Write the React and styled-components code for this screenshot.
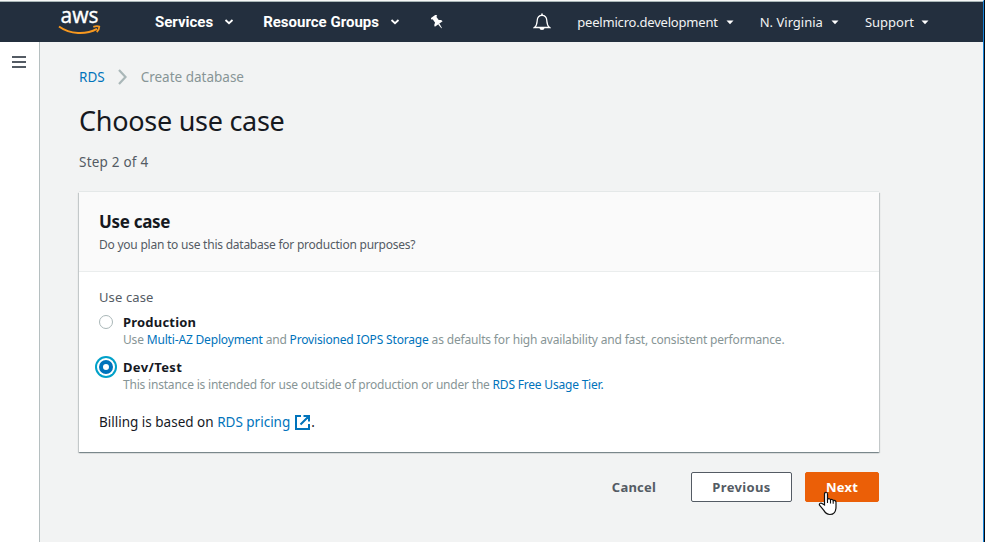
import React from "react";
import styled, { createGlobalStyle } from "styled-components";

const Global = createGlobalStyle`
  * { box-sizing: border-box; }
  body { margin: 0; overflow: hidden; font-family: "Noto Sans", sans-serif; }
`;
const Window = styled.div`
  width: 985px; height: 542px; display: flex; flex-direction: column;
  background: #f2f3f3; border-right: 1px solid #050a12;
`;
const Frame = styled.div`
  flex: 1; display: flex; flex-direction: column; min-height: 0;
  border-top: 1px solid #f7f8f8; border-right: 1px solid #1883d7;
`;
const Nav = styled.nav`
  height: 41px; flex: none; display: flex; align-items: center;
  background: #232f3e; border-top: 1px solid #aab7b8; color: #fff;
`;
const Logo = styled.svg`margin-left: 57px; flex: none; overflow: visible;`;
const MainMenu = styled.div`display: flex; align-items: center; margin-left: 53px;`;
const MainItem = styled.span`
  display: flex; align-items: center; gap: 11px; margin-right: ${(p) => p.$gap}px;
  font: 700 15px/20px Roboto, sans-serif;
`;
const AccountMenu = styled.div`display: flex; align-items: center; margin-left: auto; margin-right: 54px;`;
const AccountItem = styled.span`
  display: flex; align-items: center; gap: ${(p) => p.$inner || 8}px; margin-left: ${(p) => p.$gap}px;
  font-size: 13px; line-height: 20px; color: #f2f3f3; letter-spacing: ${(p) => p.$track || 0}px;
`;
const Body = styled.div`flex: 1; display: flex; min-height: 0;`;
const Rail = styled.aside`
  display: flex; align-items: flex-start;
  width: 40px; flex: none; background: #fff; border-right: 1px solid #b5bfc0;
  padding: 14px 0 0 12px;
`;
const Content = styled.main`width: 839px; padding: 25px 0 0 39px; color: #16191f;`;
const Crumbs = styled.div`
  display: flex; align-items: center; height: 20px; font-size: 13.5px; color: #879596;
`;
const Link = styled.a`color: #0073bb;`;
const Chevron = styled.svg`margin: 0 14px 0 13px;`;
const Title = styled.h1`
  margin: 16px 0 0; font-weight: 400; font-size: 27px; line-height: 36px; letter-spacing: -0.28px;
`;
const Step = styled.div`
  margin-top: 13px; font-size: 13.5px; line-height: 20px; color: #545b64; letter-spacing: 0.22px;
`;
const Card = styled.section`
  margin-top: 20px; width: 800px; height: 260px; background: #fff;
  box-shadow: 0 1px 1px 0 rgba(0,28,36,.3), 1px 1px 1px 0 rgba(0,28,36,.15), -1px 1px 1px 0 rgba(0,28,36,.15), 0 -1px 0 #e4e8e8;
`;
const CardHeader = styled.header`
  height: 80px; padding: 19px 20px 0; background: #fafafa; border-bottom: 1px solid #eaeded;
`;
const CardTitle = styled.h2`
  margin: 0; font-weight: 700; font-size: 17px; line-height: 22px; letter-spacing: -0.3px;
`;
const CardHint = styled.div`
  margin-top: 2px; font-size: 12px; line-height: 20px; color: #545b64; letter-spacing: -0.235px;
`;
const CardBody = styled.div`padding: 15px 20px 0;`;
const FieldLabel = styled.div`
  font-size: 13px; line-height: 20px; color: #545b64; margin-bottom: 5px; letter-spacing: 0.12px;
`;
const Option = styled.div`display: flex; gap: 10px; height: 45px;`;
const Radio = styled.span`
  width: 14px; height: 14px; margin-top: 3px; flex: none; border-radius: 50%; background: #fff;
  border: ${(p) => (p.$checked ? "4px solid #0073bb" : "1px solid #aab7b8")};
  box-shadow: ${(p) => (p.$checked ? "0 0 0 2px #fff, 0 0 0 4px #00a1c9" : "none")};
`;
const OptionName = styled.div`
  font-weight: 700; font-size: 13px; line-height: 20px; letter-spacing: ${(p) => p.$track || 0}px;
`;
const OptionHint = styled.div`
  font-size: 12px; line-height: 16px; color: #879596; white-space: nowrap;
  letter-spacing: ${(p) => p.$track || 0}px;
`;
const Billing = styled.div`
  display: flex; align-items: center; margin-top: 10px; font-size: 13.5px; line-height: 20px;
  white-space: pre;
`;
const External = styled.svg`margin: 0 1px 0 5px;`;
const Actions = styled.div`
  display: flex; justify-content: flex-end; margin-top: 20px; width: 800px; gap: 13px;
`;
const Button = styled.button`
  position: relative; width: ${(p) => p.$width}px; height: 30px; padding: 0; border-radius: 2px;
  font: 700 13px/20px "Noto Sans", sans-serif; letter-spacing: ${(p) => p.$track || 0}px;
  color: ${(p) => (p.$kind === "primary" ? "#fff" : "#545b64")};
  background: ${(p) => ({ primary: "#eb5f07", normal: "#fff" }[p.$kind] || "transparent")};
  border: 1px solid ${(p) => ({ primary: "#eb5f07", normal: "#545b64" }[p.$kind] || "transparent")};
`;
const Pointer = styled.svg`position: absolute; left: 12px; top: 18px;`;

const Caret = () => (
  <svg width="10" height="6" viewBox="0 0 10 6"><path d="M1.5 1L5 4.2 8.5 1" fill="none" stroke="#fff" strokeWidth="1.8" /></svg>
);
const SmallCaret = () => (
  <svg width="8" height="5" viewBox="0 0 8 5"><path d="M.5.5h7L4 4.3z" fill="#fff" /></svg>
);

export default function App() {
  return (
    <Window>
      <Global />
      <Frame>
        <Nav>
          <Logo width="45" height="28" viewBox="0 0 45 28">
            <text x="3.5" y="15" fill="#fff" stroke="#fff" strokeWidth="0.3" fontFamily="Noto Sans" fontSize="21" textLength="38" lengthAdjust="spacingAndGlyphs">aws</text>
            <path d="M2 18.5C13 26.5 29 27 40 20.8" fill="none" stroke="#f7981f" strokeWidth="2" />
            <path d="M36.3 18.8Q40 17.5 42.3 18.6Q42.4 21.3 39.7 24" fill="none" stroke="#f7981f" strokeWidth="1.8" />
          </Logo>
          <MainMenu>
            <MainItem $gap={29}>Services<Caret /></MainItem>
            <MainItem $gap={31}>Resource Groups<Caret /></MainItem>
            <svg width="13" height="15" viewBox="0 0 13 15">
              <g transform="translate(5.8 6.2) rotate(-35)" fill="#fff">
                <path d="M-3.3-6h6.6v2H2.200V.2C3.800.8 4.700 1.800 4.700 3.400H-4.700C-4.700 1.800-3.800.8-2.200.2V-4h-1.100z" />
                <path d="M-.8 3.400H.8L.3 8.500h-.6z" />
              </g>
            </svg>
          </MainMenu>
          <AccountMenu>
            <svg width="18" height="18" viewBox="0 0 18 18">
              <path d="M1.5 14.5C4 12.5 4 10.5 4.2 7.5 4.4 4.3 6 2.3 9 2.3s4.6 2 4.8 5.2c.2 3 .2 5 2.7 7z" fill="none" stroke="#fff" strokeWidth="1.3" />
              <path d="M8.2.6h1.6v2H8.2zM6.5 15h5a2.5 2 0 0 1-5 0z" fill="#fff" />
            </svg>
            <AccountItem $gap={26} $track={-0.2}>peelmicro.development<SmallCaret /></AccountItem>
            <AccountItem $gap={26}>N. Virginia<SmallCaret /></AccountItem>
            <AccountItem $gap={26} $inner={7}>Support<SmallCaret /></AccountItem>
          </AccountMenu>
        </Nav>
        <Body>
          <Rail>
            <svg width="14" height="12" viewBox="0 0 14 12"><path d="M0 1h14M0 6h14M0 11h14" stroke="#545b64" strokeWidth="2" /></svg>
          </Rail>
          <Content>
            <Crumbs>
              <Link>RDS</Link>
              <Chevron width="9" height="16" viewBox="0 0 9 16"><path d="M1 1l6.5 7L1 15" fill="none" stroke="#aab7b8" strokeWidth="2.2" /></Chevron>
              <span>Create database</span>
            </Crumbs>
            <Title>Choose use case</Title>
            <Step>Step 2 of 4</Step>
            <Card>
              <CardHeader>
                <CardTitle>Use case</CardTitle>
                <CardHint>Do you plan to use this database for production purposes?</CardHint>
              </CardHeader>
              <CardBody>
                <FieldLabel>Use case</FieldLabel>
                <Option>
                  <Radio />
                  <div>
                    <OptionName $track={0.2}>Production</OptionName>
                    <OptionHint $track={-0.172}>Use <Link>Multi-AZ Deployment</Link> and <Link>Provisioned IOPS Storage</Link> as defaults for high availability and fast, consistent performance.</OptionHint>
                  </div>
                </Option>
                <Option>
                  <Radio $checked />
                  <div>
                    <OptionName $track={0.35}>Dev/Test</OptionName>
                    <OptionHint $track={-0.2}>This instance is intended for use outside of production or under the <Link>RDS Free Usage Tier.</Link></OptionHint>
                  </div>
                </Option>
                <Billing>
                  <span>Billing is based on </span><Link>RDS pricing</Link>
                  <External width="15" height="15" viewBox="0 0 15 15">
                    <path d="M6 1H1v13h13V9M8.5 1H14v5.5M14 1L5.5 9.5" fill="none" stroke="#0073bb" strokeWidth="2" />
                  </External>.
                </Billing>
              </CardBody>
            </Card>
            <Actions>
              <Button $width={88} $track={0.25}>Cancel</Button>
              <Button $width={101} $kind="normal" $track={0.35}>Previous</Button>
              <Button $width={74} $kind="primary" $track={0.25}>
                Next
                <Pointer width="20" height="25" viewBox="0 0 20 25">
                  <path d="M6.5 14V3.2C6.5.6 9.5.6 9.5 3.2v5c1-.9 2.7-.5 3 .6 1-.7 2.4-.3 2.7.8 1.2-.6 2.8.1 2.8 1.7v4.5c0 5-2.3 7.7-6.2 7.7-3.8 0-4.8-2-6.4-4.7L1.7 14.5c-1.1-1.8 1-3.2 2.4-1.9z" fill="#fff" stroke="#111" strokeWidth="1.2" />
                  <path d="M9.5 8v4M12.5 9v3.5M15.2 9.7v3" stroke="#111" strokeWidth="1.1" />
                </Pointer>
              </Button>
            </Actions>
          </Content>
        </Body>
      </Frame>
    </Window>
  );
}
